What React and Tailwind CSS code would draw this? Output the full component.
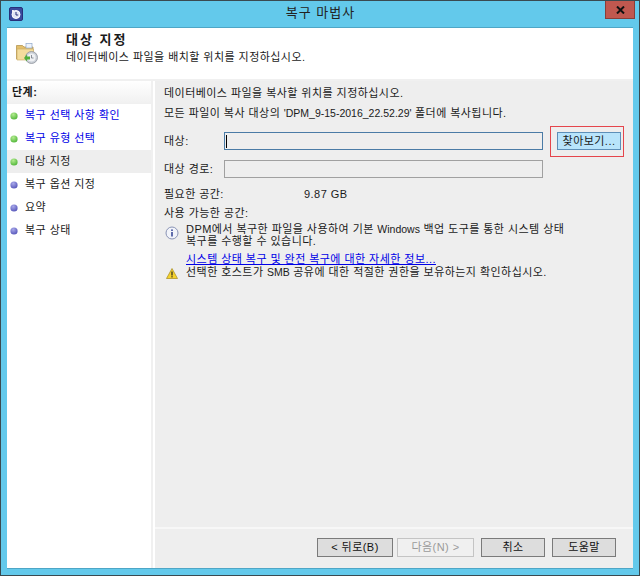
import React from "react";

const font = { fontFamily: '"Liberation Sans", "Noto Sans CJK KR", sans-serif' };

const steps = [
  { label: "복구 선택 사항 확인", done: true, link: true },
  { label: "복구 유형 선택", done: true, link: true },
  { label: "대상 지정", done: true, active: true },
  { label: "복구 옵션 지정" },
  { label: "요약" },
  { label: "복구 상태" },
];

function AppIcon() {
  return (
    <svg width="14" height="14" viewBox="0 0 14 14">
      <rect x="0.5" y="0.5" width="13" height="13" rx="1.5" fill="#3a4a9c" stroke="#27307a" />
      <circle cx="7" cy="7.5" r="4" fill="#dfe6f5" stroke="#fff" />
      <path d="M7 5v3h2.2" stroke="#27307a" strokeWidth="1" fill="none" />
      <path d="M3 3l2.5.2L3.2 5.4z" fill="#fff" />
    </svg>
  );
}

function FolderIcon() {
  return (
    <svg width="22" height="21" viewBox="0 0 22 21">
      <path d="M.5 2.5h6l1.5 1.5h9v12h-16.500z" fill="#e3bf6c" stroke="#b59650" strokeWidth="0.8" />
      <path d="M1 6h16.500v11h-16.500z" fill="#f3dc9c" stroke="#c9a85f" strokeWidth="0.6" />
      <rect x="10" y="0.500" width="6" height="4.500" fill="#eef3fa" stroke="#8fa8cc" strokeWidth="0.7" />
      <circle cx="15.500" cy="14.500" r="6" fill="#c9ced6" stroke="#8d939c" strokeWidth="0.8" />
      <circle cx="15.500" cy="14.500" r="4" fill="#eef0f3" />
      <path d="M15.500 12v3h2" stroke="#6f7680" strokeWidth="0.8" fill="none" />
      <path d="M8 15l3-3.500v2h3v3h-3v2z" fill="#4fae3a" />
    </svg>
  );
}

function Dot({ done }) {
  return (
    <svg width="8" height="8" viewBox="0 0 8 8" className="shrink-0">
      <defs>
        <radialGradient id="dotGreen" cx="0.4" cy="0.3" r="0.8">
          <stop offset="0" stopColor="#b4ec90" />
          <stop offset="1" stopColor="#45b02f" />
        </radialGradient>
        <radialGradient id="dotBlue" cx="0.4" cy="0.3" r="0.8">
          <stop offset="0" stopColor="#a9a9ea" />
          <stop offset="1" stopColor="#4c4cb4" />
        </radialGradient>
      </defs>
      <circle cx="4" cy="4" r="3.6" fill={done ? "url(#dotGreen)" : "url(#dotBlue)"} />
    </svg>
  );
}

function InfoIcon() {
  return (
    <svg width="14" height="14" viewBox="0 0 14 14" className="shrink-0">
      <circle cx="7" cy="7" r="6" fill="#f2f4fa" stroke="#8a93b5" />
      <rect x="6.200" y="6" width="1.600" height="4.500" fill="#3c4c9a" />
      <rect x="6.200" y="3.400" width="1.600" height="1.600" fill="#3c4c9a" />
    </svg>
  );
}

function WarnIcon() {
  return (
    <svg width="12" height="11" viewBox="0 0 12 11" className="shrink-0">
      <path d="M6 .5L11.500 10.500H.5z" fill="#f6d32d" stroke="#a58a1c" strokeWidth="0.7" />
      <rect x="5.400" y="3.500" width="1.200" height="4" fill="#222" />
      <rect x="5.400" y="8.200" width="1.200" height="1.200" fill="#222" />
    </svg>
  );
}

// latin runs are narrower than the hangul spacing in the reference
function Latin({ children }) {
  return <span className="text-[10.5px] tracking-normal">{children}</span>;
}

function WizardButton({ children, disabled }) {
  return (
    <button
      className={`w-full h-[19px] flex items-center justify-center border text-[11px] leading-none tracking-[0.45px] ${
        disabled ? "border-[#c4c4c4] bg-[#f0f0f0] text-[#9a9a9a]" : "border-[#7a7a7a] bg-[#dddddd] text-[#111]"
      }`}
    >
      {children}
    </button>
  );
}

export default function App() {
  return (
    <div
      style={font}
      className="w-[640px] h-[576px] bg-[#63c9eb] border border-[#3a4a50] flex flex-col text-[11px] leading-none tracking-[0.45px] text-[#1a1a1a] overflow-hidden"
    >
      <div className="h-[26px] shrink-0 flex items-center relative pl-[8px]">
        <AppIcon />
        <div className="flex-1 text-center text-[13px] pr-[21px] pb-[3px] tracking-[1px] text-[#222]">복구 마법사</div>
        <div className="absolute right-[4px] top-0 w-[30px] h-[18px] bg-[#c0584f] border border-[#8a3e38] border-t-0 flex items-center justify-center text-white">
          <svg width="9" height="8" viewBox="0 0 9 8">
            <path d="M1 .5l7 7M8 .5l-7 7" stroke="#111" strokeWidth="2" />
          </svg>
        </div>
      </div>

      <div className="flex-1 mx-[6px] mb-[6px] flex flex-col border-t border-b border-[#4ea6c6] bg-white min-h-0">
        <div className="h-[53px] shrink-0 bg-white border-b-2 border-[#f0f0f0] flex">
          <div className="w-[59px] pl-[9px] pt-[15px]">
            <FolderIcon />
          </div>
          <div>
            <div className="mt-[4px] text-[13px] font-bold leading-[15px] tracking-[2px]">대상 지정</div>
            <div className="mt-[3px] leading-[14px]">데이터베이스 파일을 배치할 위치를 지정하십시오.</div>
          </div>
        </div>

        <div className="flex-1 flex min-h-0">
          <div className="w-[146px] shrink-0 bg-white border-r-[2px] border-[#f0f0f0]">
            <div className="h-[23px] pl-[5px] flex items-center font-bold bg-gradient-to-b from-white to-[#f0f0f0]">
              단계:
            </div>
            <div className="flex flex-col">
              {steps.map((s) => (
                <div
                  key={s.label}
                  className={`h-[23px] flex items-center gap-[7px] pl-[3px] ${s.active ? "bg-[#eeeeee]" : ""} ${
                    s.link ? "text-[#0000e6]" : "text-[#1a1a1a]"
                  }`}
                >
                  <Dot done={s.done} />
                  <span>{s.label}</span>
                </div>
              ))}
            </div>
          </div>

          <div className="flex-1 ml-[2px] bg-[#eeeeee] flex flex-col pl-[9px] min-w-0">
            <div className="mt-[4px] leading-[16px]">데이터베이스 파일을 복사할 위치를 지정하십시오.</div>
            <div className="mt-[4px] leading-[16px]">
              모든 파일이 복사 대상의 <Latin>'DPM_9-15-2016_22.52.29'</Latin> 폴더에 복사됩니다.
            </div>

            <div className="mt-[11px] flex items-center relative">
              <span className="w-[60px]">대상:</span>
              <div className="w-[319px] h-[18px] border border-[#4a7ba6] bg-[#eeeeee] flex items-center pl-[1px]">
                <div className="w-px h-[13px] bg-black" />
              </div>
              <div className="ml-[7px] w-[74px] h-[31px] border border-[#e5454c] flex items-center justify-end pr-[2px] -my-[7px]">
                <button className="w-[64px] h-[18px] bg-[#b8e4fb] border border-[#5d8fb8] text-[11px] leading-none tracking-[0.45px]">
                  찾아보기...
                </button>
              </div>
            </div>

            <div className="mt-[10px] flex items-center">
              <span className="w-[60px]">대상 경로:</span>
              <div className="w-[319px] h-[18px] border border-[#a0a0a0] bg-[#eeeeee]" />
            </div>

            <div className="mt-[9px] flex leading-[14px]">
              <span className="w-[140px]">필요한 공간:</span>
              <span>9.87 GB</span>
            </div>
            <div className="mt-[5px] leading-[14px]">사용 가능한 공간:</div>

            <div className="mt-[3px] flex items-start gap-[7px] pl-[1px] relative">
              <div className="pt-[3px]">
                <InfoIcon />
              </div>
              <div className="leading-[12px]">
                <div>
                  DPM에서 복구한 파일을 사용하여 기본 <Latin>Windows</Latin> 백업 도구를 통한 시스템 상태
                </div>
                <div>복구를 수행할 수 있습니다.</div>
              </div>
            </div>

            <div className="mt-[6px] pl-[22px] leading-[12px] text-[#0000e6] underline">
              시스템 상태 복구 및 완전 복구에 대한 자세한 정보...
            </div>
            <div className="mt-[1px] flex items-start gap-[8px] pl-[2px] leading-[12px]">
              <div className="pt-[2px]">
                <WarnIcon />
              </div>
              <span>
                선택한 호스트가 <Latin>SMB</Latin> 공유에 대한 적절한 권한을 보유하는지 확인하십시오.
              </span>
            </div>

            <div className="flex-1" />
            <div className="h-[41px] -ml-[9px] border-t-2 border-[#f7f7f7] flex items-start pt-[9px] pl-[162px]">
              <div className="w-[76px]">
                <WizardButton>&lt; 뒤로(B)</WizardButton>
              </div>
              <div className="w-[77px] ml-[4px]">
                <WizardButton disabled>다음(N) &gt;</WizardButton>
              </div>
              <div className="w-[64px] ml-[7px]">
                <WizardButton>취소</WizardButton>
              </div>
              <div className="w-[64px] ml-[7px]">
                <WizardButton>도움말</WizardButton>
              </div>
            </div>
          </div>
        </div>
      </div>
    </div>
  );
}
